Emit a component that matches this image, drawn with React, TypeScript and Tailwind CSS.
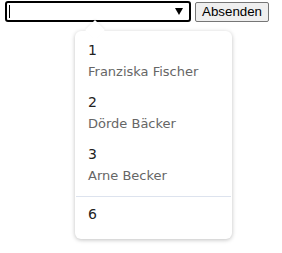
import React from "react";

const items = [
  { v: "1", l: "Franziska Fischer" },
  { v: "2", l: "Dörde Bäcker" },
  { v: "3", l: "Arne Becker" },
];

export default function App() {
  return (
    <div className="relative w-[282px] h-[253px] bg-white">
      <div className="flex items-start gap-[4px] pl-[5px] pt-[1px]">
        <div className="relative w-[186px] h-[21px] border-2 border-black rounded-[3px] bg-white flex items-center">
          <div className="ml-[2px] w-[1px] h-[13px] bg-black" />
          <div className="absolute right-[6px] top-[5px] w-0 h-0 border-l-[4px] border-r-[4px] border-t-[7px] border-l-transparent border-r-transparent border-t-black" />
        </div>
        <button
          className="h-[20px] mt-[1px] px-[6px] bg-[#efefef] border border-[#767676] rounded-[2px] text-[13.33px] leading-[16px] text-black"
          style={{ fontFamily: '"Liberation Sans", Arial, sans-serif' }}
        >
          Absenden
        </button>
      </div>
      <div
        className="absolute left-[75px] top-[31px] w-[157px] bg-white rounded-[6px] shadow-[0_1px_4px_rgba(0,0,0,0.25)] pt-[4px] pb-[10px]"
        style={{ fontFamily: '"DejaVu Sans", sans-serif' }}
      >
        <div className="absolute left-[13px] top-[-8px] w-[14px] h-[14px] bg-white rotate-45 shadow-[-1px_-1px_2px_rgba(0,0,0,0.06)]" />
        <div className="relative">
          {items.map((it) => (
            <div key={it.v} className="px-[13px] py-[4px]">
              <div className="text-[14px] leading-[22px] text-[#222]">{it.v}</div>
              <div className="text-[13px] leading-[22px] text-[#666]">{it.l}</div>
            </div>
          ))}
          <div className="h-px bg-[#dde3ee] mt-[5px] mx-[1px]" />
          <div className="px-[13px] pt-[6px] pb-[4px]">
            <div className="text-[14px] leading-[22px] text-[#222]">6</div>
          </div>
        </div>
      </div>
    </div>
  );
}
